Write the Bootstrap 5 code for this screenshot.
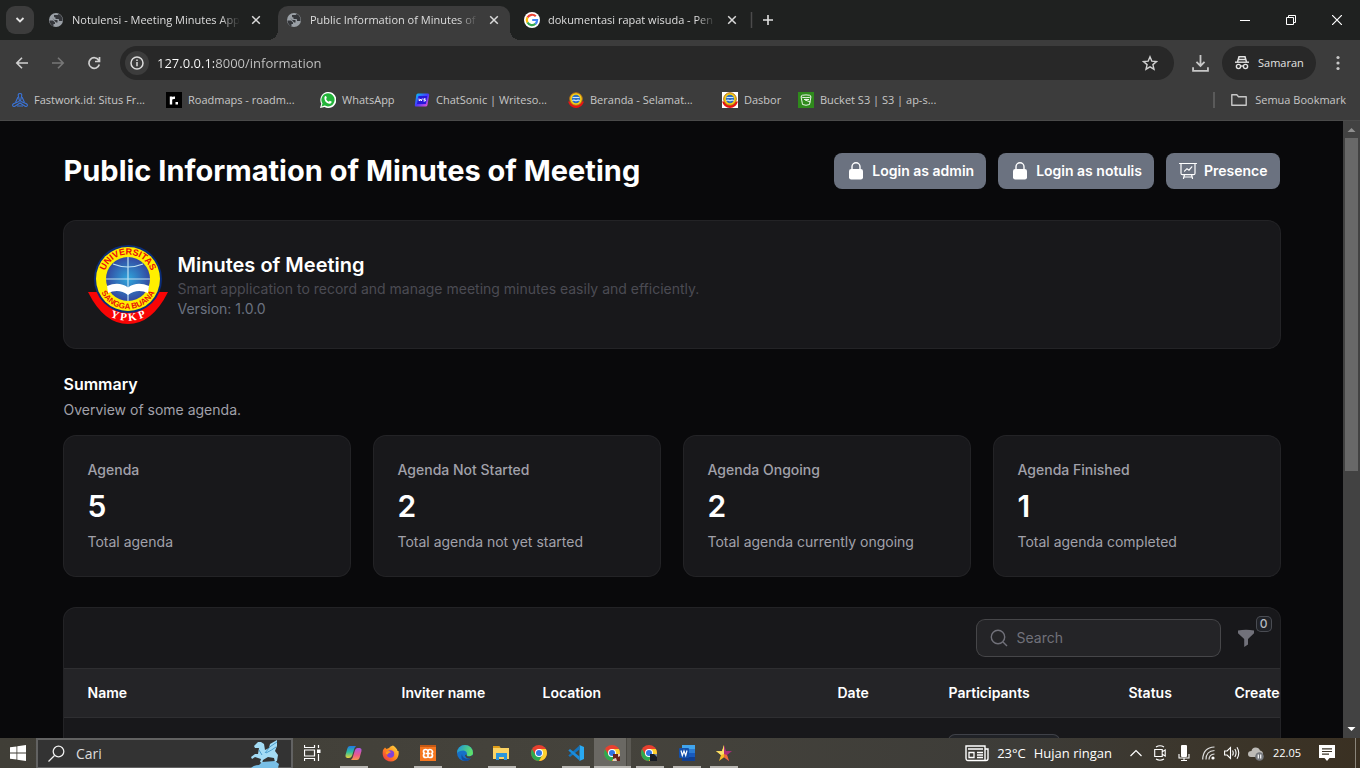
<!DOCTYPE html>
<html lang="en" data-bs-theme="dark">
<head>
<meta charset="utf-8">
<meta name="viewport" content="width=device-width, initial-scale=1">
<title>Public Information of Minutes of Meeting</title>
<link href="https://cdn.jsdelivr.net/npm/bootstrap@5.3.0/dist/css/bootstrap.min.css" rel="stylesheet">
<style>
body{font-family:"Open Sans","Noto Sans",sans-serif;font-size:11px;line-height:16px;color:#dedede;background:#09090b}
svg{display:block;flex:none}
button{border:0;background:none;color:inherit;padding:0}
a{color:inherit;text-decoration:none}
/* browser frame */
.tabstrip{height:40px;background:#1f2120;padding-left:6px}
.tab-menu{width:28px;height:28px;border-radius:9px;background:#3c3c3c}
.tabs{gap:6px;margin-left:6px;padding-top:6px}
.tab-item{width:232px;padding:0 8px 6px;gap:8px;position:relative;border-radius:10px 10px 0 0}
.tab-item.current{background:#3c3c3c}
.tab-item.current::before,.tab-item.current::after{content:"";position:absolute;bottom:0;width:10px;height:10px}
.tab-item.current::before{left:-10px;background:radial-gradient(circle at 0 0,transparent 10px,#3c3c3c 10px)}
.tab-item.current::after{right:-10px;background:radial-gradient(circle at 100% 0,transparent 10px,#3c3c3c 10px)}
.tab-title{overflow:hidden;white-space:nowrap;width:168px;-webkit-mask-image:linear-gradient(90deg,#000 148px,transparent 168px);mask-image:linear-gradient(90deg,#000 148px,transparent 168px)}
.win-btn{width:46px;height:40px;color:#fff}
.chrome-bars{background:#3c3c3c;border-bottom:1px solid #4a4a4a}
.toolbar{height:46px;padding:0 4px;color:#c7c7c7}
.tool-btn{width:36px;height:34px}
.omnibox{height:34px;border-radius:17px;background:#282828;padding:0 16px 0 5px}
.site-info{width:24px;height:24px;border-radius:12px;background:#3c3c3c}
.url-input{border:0;outline:0;font-size:13px;line-height:20px;padding:0;color:transparent;background:linear-gradient(90deg,#fff 57px,#c7c7c7 57px);-webkit-background-clip:text;background-clip:text}
.dl{padding:0 13px 0 18px}
.incog{height:34px;border-radius:17px;background:#282828;padding:0 12px;gap:8px;width:94px;color:#e3e3e3}
.bookmarks{height:34px;padding:0 14px 6px 12px;color:#c7c7c7}
.bm{gap:6px;white-space:nowrap;width:154px}
.bm-mid{width:94px}
.bm-short{width:76px}
.bm-sep{width:2px;height:16px;background:#5a5a5a;margin-right:16px}
/* page */
.view{min-height:0}
.page{font-family:Inter,sans-serif;font-size:14px;line-height:20px;color:#a1a1aa;overflow:hidden}
.shell{max-width:1280px;padding:32px}
.page h1{font-size:29px;line-height:36px;font-weight:700;color:#fff}
.acts{gap:12px}
.act{height:36px;border-radius:8px;background:#6b7280;color:#fff;font-weight:600;padding:0 12px;gap:6px}
.panel{background:#18181b;border-radius:12px;box-shadow:0 0 0 1px #232326}
.block-gap{margin-top:32px}
.brand{padding:24px 24px 23px;gap:10px}
.brand h2{font-size:20px;line-height:28px;font-weight:600;color:#fff}
.dim{color:#4b4b53}.dim2{color:#6b7280}
.sum-title{font-size:16px;line-height:24px;font-weight:600;color:#fff}
.stats{gap:24px}
.stat{padding:24px;gap:8px;flex:1 1 0}
.stat-label{font-weight:500}
.stat-num{font-size:30px;line-height:36px;font-weight:600;color:#fff}
.tbl-tools{padding:12px 16px 12px 24px;gap:8px;border-bottom:1px solid #2e2e31}
.find{width:243px;height:36px;border-radius:8px;background:#242427;box-shadow:0 0 0 1px #464649;padding:0 12px;gap:8px}
.find input{border:0;outline:0;background:none;color:#fff;padding:0;min-width:0}
.find input::placeholder{color:#71717a;opacity:1}
.filter{width:36px;height:36px;position:relative;color:#71717a}
.count{position:absolute;right:-8px;top:-4px;width:16px;height:16px;border-radius:5px;background:#202227;box-shadow:inset 0 0 0 1px #4a4c53;color:#b6b9c0;font-size:12px;line-height:16px;font-weight:500}
.agenda-scroll{overflow:hidden;border-radius:0 0 12px 12px}
.agenda{table-layout:fixed;width:120%;color:#fff;border-collapse:collapse}
.agenda th{height:48px;background:#242427;padding:0 12px;font-weight:600;border-bottom:1px solid #2e2e31;white-space:nowrap}
.agenda th:first-child{padding-left:24px}
.agenda td{padding:17px 12px}
.people{width:110px;height:24px;border-radius:6px;background:#202227;box-shadow:0 0 0 1px #3f4148}
.c1{width:326px}.c2{width:141px}.c3{width:295px}.c4{width:111px}.c5{width:180px}.c6{width:106px}
.scroller{width:17px;background:#424242}
.thumb{width:13px;height:54%;background:#686868}
/* taskbar */
.taskbar{height:30px;background:linear-gradient(90deg,#403e37 0,#45433c 45%,#3d3c38 75%,#3b3428 92%,#3a3022 100%);color:#fff}
.start{width:36px}
.win-search{width:257px;background:#333;border:2px solid #626262;border-bottom-width:1px;padding-left:10px;gap:11px}
.win-search input{border:0;outline:0;background:none;padding:0;width:160px;font-size:14px;color:#ddd}
.win-search input::placeholder{color:#dcdcdc;opacity:1}
.tv{width:38px}
.app{width:37px;position:relative}
.app.on::after{content:"";position:absolute;bottom:0;left:5px;right:4px;height:2px;background:#b9b7b3}
.app.front{background:linear-gradient(90deg,#6a6863 32px,#4a4842 32px 33px,#5b5953 33px)}
.app.front::after{left:0;right:0}
.slot{width:24px}
.weather{font-size:13px;gap:8px;margin-right:12px}
.clock{width:41px;padding-left:5px}
.note{width:36px}
.peek{width:11px;border-right:1px solid #8a857b;margin-right:4px}
</style>
</head>
<body class="d-flex flex-column vh-100 overflow-hidden">
<svg width="0" height="0" class="position-absolute" aria-hidden="true">
<defs>
<radialGradient id="sky"><stop offset="0" stop-color="#2fa6dc"/><stop offset="1" stop-color="#3348a0"/></radialGradient>
<linearGradient id="ws" x1="0" x2="1" y2="1"><stop offset="0" stop-color="#00d5f5"/><stop offset=".5" stop-color="#4836ff"/><stop offset="1" stop-color="#ff58c8"/></linearGradient>
<linearGradient id="edge" x1="0" x2="1" y2=".3"><stop offset="0" stop-color="#1b8fe0"/><stop offset="1" stop-color="#5ee06b"/></linearGradient>
<linearGradient id="fx" x1="1" x2="0" y2="1"><stop offset="0" stop-color="#ffe04a"/><stop offset=".5" stop-color="#ff8a1c"/><stop offset="1" stop-color="#f0244c"/></linearGradient>
<linearGradient id="cpa" x2="0" y2="1"><stop offset="0" stop-color="#2277e8"/><stop offset=".5" stop-color="#2bc09c"/><stop offset="1" stop-color="#e8d23a"/></linearGradient>
<linearGradient id="cpb" x2="0" y2="1"><stop offset="0" stop-color="#a557e8"/><stop offset=".6" stop-color="#ee5a88"/><stop offset="1" stop-color="#f89b4c"/></linearGradient>
<path id="arcTop" d="M15.500 34A24.500 24.500 0 0 1 64.500 34"/>
<path id="arcLow" d="M10 34A30 30 0 0 0 70 34"/>
<path id="arcBase" d="M2 51A41.600 41.600 0 0 0 78 51"/>
<symbol id="globe" viewBox="0 0 16 16"><circle cx="8" cy="8" r="7" fill="#9aa0a6"/><path d="M1.500 8.500H5L7 10.500V12H5.500V14.500C3 13.500 1.500 11 1.500 8.500ZM6 3V4.500Q6 5.500 7.500 5.500V7H10.500Q11.500 7.300 11 9H14.500Q15 4 10.500 1.800Q10.500 3 9.500 3ZM4 5.500L6.500 8H9.500V10.500H8Z" fill="#34363a"/></symbol>
<symbol id="shut" viewBox="0 0 16 16"><path d="M4.200 4.200l7.600 7.600M11.800 4.200l-7.600 7.600" stroke="#dadada" stroke-width="1.500" fill="none"/></symbol>
<symbol id="crest" viewBox="0 0 16 16"><path d="M0 9.500h16Q14 16 8 16T0 9.500Z" fill="#e81313"/><circle cx="8" cy="7" r="6.300" fill="#f8cf16" stroke="#b06a16"/><circle cx="8" cy="7" r="4.200" fill="#2d6fc2"/><path d="M4.200 8.500q2-1 3.800.4 2-1.400 3.800-.4M4.500 5.500h7" stroke="#cfe6f7" fill="none" stroke-width="1.100"/></symbol>
<symbol id="chrome" viewBox="0 0 16 16"><circle cx="8" cy="8" r="8" fill="#e8402f"/><path d="M1.100 4A8 8 0 0 0 8 16l3.500-6H4.500Z" fill="#2da94f"/><path d="M8 16A8 8 0 0 0 14.900 4H8l3.500 6Z" fill="#fdd131"/><circle cx="8" cy="8" r="4" fill="#fff"/><circle cx="8" cy="8" r="3" fill="#2f75e6"/></symbol>
<symbol id="lock" viewBox="0 0 20 20"><path d="M6 9V5.700a4 4 0 0 1 8 0V9" fill="none" stroke="#fff" stroke-width="1.400"/><rect x="3" y="8" width="14" height="10.500" rx="2.200" fill="#fff"/></symbol>
</defs>
</svg>

<header>
<div class="tabstrip d-flex align-items-center">
  <button class="tab-menu d-flex align-items-center justify-content-center" aria-label="Search tabs"><svg width="12" height="12" viewBox="0 0 12 12"><path d="M2.500 4l3.500 3.500L9.500 4" fill="none" stroke="#e3e3e3" stroke-width="1.800"/></svg></button>
  <div class="tabs d-flex align-self-stretch">
    <div class="tab-item d-flex align-items-center"><svg width="16" height="16"><use href="#globe"/></svg><span class="tab-title">Notulensi - Meeting Minutes App</span><button aria-label="Close tab"><svg width="16" height="16"><use href="#shut"/></svg></button></div>
    <div class="tab-item current d-flex align-items-center"><svg width="16" height="16"><use href="#globe"/></svg><span class="tab-title">Public Information of Minutes of</span><button aria-label="Close tab"><svg width="16" height="16"><use href="#shut"/></svg></button></div>
    <div class="tab-item d-flex align-items-center"><svg width="16" height="16" viewBox="0 0 16 16"><circle cx="8" cy="8" r="8" fill="#fff"/><g fill="none" stroke-width="2.200"><path d="M11.800 4.300A5.200 5.200 0 0 0 3.500 5.500" stroke="#ea4335"/><path d="M3.500 5.400A5.200 5.200 0 0 0 3.500 10.600" stroke="#fbbc05"/><path d="M3.500 10.500A5.200 5.200 0 0 0 11.500 11.800" stroke="#34a853"/><path d="M11.400 11.900A5.200 5.200 0 0 0 13.100 8H8.200" stroke="#4285f4"/></g></svg><span class="tab-title">dokumentasi rapat wisuda - Pen</span><button aria-label="Close tab"><svg width="16" height="16"><use href="#shut"/></svg></button></div>
  </div>
  <svg width="40" height="28" viewBox="0 0 40 28"><path d="M3.500 6v16" stroke="#4b4b4b" stroke-width="1.500"/><path d="M20 9v10M15 14h10" stroke="#e0e0e0" stroke-width="1.600"/></svg>
  <div class="d-flex ms-auto">
    <button class="win-btn d-flex align-items-center justify-content-center" aria-label="Minimize"><svg width="10" height="10"><path d="M0 5.500h10" stroke="#fff"/></svg></button>
    <button class="win-btn d-flex align-items-center justify-content-center" aria-label="Restore"><svg width="10" height="10"><path d="M.5 2.500h7v7h-7zM2.500 2.500v-2h7v7h-2" fill="none" stroke="#fff"/></svg></button>
    <button class="win-btn d-flex align-items-center justify-content-center" aria-label="Close"><svg width="10" height="10"><path d="M0 0l10 10M10 0L0 10" stroke="#fff" stroke-width="1.200"/></svg></button>
  </div>
</div>
<div class="chrome-bars">
<div class="toolbar d-flex align-items-center">
  <button class="tool-btn d-flex align-items-center justify-content-center" aria-label="Back"><svg width="14" height="14" viewBox="0 0 14 14"><path d="M13 7H2M7 1.800L1.800 7 7 12.200" fill="none" stroke="#d0d0d0" stroke-width="1.600"/></svg></button>
  <button class="tool-btn d-flex align-items-center justify-content-center" aria-label="Forward"><svg width="14" height="14" viewBox="0 0 14 14"><path d="M1 7h11M7 1.800L12.200 7 7 12.200" fill="none" stroke="#777" stroke-width="1.600"/></svg></button>
  <button class="tool-btn d-flex align-items-center justify-content-center" aria-label="Reload"><svg width="14" height="14" viewBox="0 0 14 14"><path d="M11.700 4.200A5.300 5.300 0 1 0 12.300 8.500M12.500 1v4.500H8" fill="none" stroke="#d0d0d0" stroke-width="1.700"/></svg></button>
  <div class="omnibox d-flex align-items-center flex-grow-1 ms-2">
    <button class="site-info d-flex align-items-center justify-content-center" aria-label="Site information"><svg width="14" height="14" viewBox="0 0 14 14"><circle cx="7" cy="7" r="6" fill="none" stroke="#dcdcdc" stroke-width="1.500"/><path d="M7 6v4.200M7 3.500v1.500" stroke="#dcdcdc" stroke-width="1.500"/></svg></button>
    <input class="url-input flex-grow-1 ms-2" type="text" aria-label="Address" value="127.0.0.1:8000/information">
    <button aria-label="Bookmark this page"><svg width="16" height="16" viewBox="0 0 16 16"><path d="M8 1.800l1.800 4.300 4.700.4-3.600 3.100 1.100 4.600L8 11.800l-4 2.400 1.100-4.600L1.500 6.500l4.700-.4Z" fill="none" stroke="#d0d0d0" stroke-width="1.400"/></svg></button>
  </div>
  <button class="dl d-flex justify-content-center" aria-label="Downloads"><svg width="17" height="17" viewBox="0 0 16 16"><path d="M8 0v10M4.200 6.500L8 10.300l3.800-3.800M1 11.500V15h14v-3.500" fill="none" stroke="#c7c7c7" stroke-width="1.700"/></svg></button>
  <button class="incog d-flex align-items-center me-1" aria-label="Samaran"><svg width="16" height="16" viewBox="0 0 16 16"><path d="M1 7.200h14" stroke="#e3e3e3" stroke-width="1.400"/><path d="M3.500 7L5 1.700h6L12.500 7M5 4.500h6" fill="none" stroke="#e3e3e3" stroke-width="1.500"/><circle cx="4.500" cy="11.500" r="2.100" fill="none" stroke="#e3e3e3" stroke-width="1.400"/><circle cx="11.500" cy="11.500" r="2.100" fill="none" stroke="#e3e3e3" stroke-width="1.400"/><path d="M6.500 11h3" stroke="#e3e3e3" stroke-width="1.300"/></svg>Samaran</button>
  <button class="tool-btn d-flex align-items-center justify-content-center" aria-label="Menu"><svg width="4" height="16" viewBox="0 0 4 16" fill="#c7c7c7"><circle cx="2" cy="2.500" r="1.600"/><circle cx="2" cy="8" r="1.600"/><circle cx="2" cy="13.500" r="1.600"/></svg></button>
</div>
<nav class="bookmarks d-flex align-items-center" aria-label="Bookmarks">
  <a href="#" class="bm d-flex align-items-center"><svg width="16" height="16" viewBox="0 0 16 16"><g fill="none" stroke="#3b74d8" stroke-width="1.100"><path d="M8 1.500c2 0 2 1.500 1.500 3L8.500 9h-1L6.500 4.500C6 3 6 1.500 8 1.500Z"/><path d="M7 9.500l-5.500 2.300c-1.500 1-1 3 1 2.700L8 11l5.500 3.500c2 .3 2.500-1.700 1-2.700L9 9.500"/><path d="M6 5L3.500 10.500M10 5l2.500 5.500M5 14h6"/></g></svg>Fastwork.id: Situs Fr...</a>
  <a href="#" class="bm d-flex align-items-center"><svg width="16" height="16" viewBox="0 0 16 16"><path d="M0 0h16v16H0Z" fill="#000"/><path d="M5 12.500V4.500M5 8.500q0-3 4-2.700" fill="none" stroke="#fff" stroke-width="2.400"/><path d="M9.500 10h2.500v2.500H9.500Z" fill="#fff"/></svg>Roadmaps - roadm...</a>
  <a href="#" class="bm bm-mid d-flex align-items-center"><svg width="16" height="16" viewBox="0 0 16 16"><path d="M0 16L1.300 11.800A8 8 0 1 1 4.500 15Z" fill="#fff"/><path d="M1.500 14.500L2.500 11.500A6.600 6.600 0 1 1 4.800 13.600Z" fill="#23b33a"/><path d="M5 4.300q1-.8 1.600 1l.2.800-.8 1q1 2 2.800 2.700l1-1 2 1q-.4 2.200-2.700 1.900Q4.500 10.500 4.400 6q0-1 .6-1.700Z" fill="#fff"/></svg>WhatsApp</a>
  <a href="#" class="bm d-flex align-items-center"><svg width="16" height="16" viewBox="0 0 16 16"><path d="M4 1.500h10q1.500 0 1.200 1.500L13.500 13q-.3 1.500-2 1.500H2Q.5 14.500.8 13L2.300 3Q2.500 1.500 4 1.500Z" fill="url(#ws)"/><path d="M4.500 4h8.800l-1.500 8H3Z" fill="#2617d8"/><path d="M5 6.500l.3 2.500 1.200-2 .8 2 1-2.500M11.500 6.800h-1.600v1h1.400v1.200H9.500" stroke="#fff" fill="none"/></svg>ChatSonic | Writeso...</a>
  <a href="#" class="bm d-flex align-items-center"><svg width="16" height="16"><use href="#crest"/></svg>Beranda - Selamat...</a>
  <a href="#" class="bm bm-short d-flex align-items-center"><svg width="16" height="16"><path d="M0 0h16v16H0Z" fill="#fff"/><use href="#crest"/></svg>Dasbor</a>
  <a href="#" class="bm d-flex align-items-center"><svg width="16" height="16" viewBox="0 0 16 16"><path d="M0 0h16v16H0Z" fill="#2f8a1c"/><path d="M3 4.500L4.500 12.500q3.500 1.500 7 0L13 4.500" fill="none" stroke="#e8f5e4"/><ellipse cx="8" cy="4.300" rx="5" ry="1.400" fill="none" stroke="#e8f5e4"/><path d="M6 7.500h5M7 8l5.500 2" stroke="#e8f5e4" fill="none"/></svg>Bucket S3 | S3 | ap-s...</a>
  <span class="bm-sep ms-auto"></span>
  <a href="#" class="d-flex align-items-center gap-2 text-nowrap"><svg width="16" height="14" viewBox="0 0 16 14"><path d="M.8 1.800h5l1.700 2h7.700v8.400H.8Z" fill="none" stroke="#c7c7c7" stroke-width="1.400" stroke-linejoin="round"/></svg>Semua Bookmark</a>
</nav>
</div>
</header>

<div class="view d-flex flex-grow-1">
<main class="page flex-grow-1">
<div class="shell mx-auto">
  <div class="d-flex justify-content-between align-items-center">
    <h1 class="m-0">Public Information of Minutes of Meeting</h1>
    <div class="acts d-flex">
      <a href="#" class="act d-flex align-items-center"><svg width="20" height="20"><use href="#lock"/></svg>Login as admin</a>
      <a href="#" class="act d-flex align-items-center"><svg width="20" height="20"><use href="#lock"/></svg>Login as notulis</a>
      <a href="#" class="act d-flex align-items-center"><svg width="20" height="20" viewBox="0 0 20 20"><path d="M1.500 2.500h17M3 2.500v9.700q0 1.500 1.500 1.500h11q1.500 0 1.500-1.500V2.500M6.500 13.700L5.500 17.500M13.500 13.700l1 3.800M6 16h8M6.500 10.200l2.500-2.500 2 1.500 2.800-3.400" fill="none" stroke="#fff" stroke-width="1.200" stroke-linecap="round"/></svg>Presence</a>
    </div>
  </div>
  <section class="panel brand block-gap d-flex align-items-center">
    <svg width="80" height="80" viewBox="0 0 80 80" role="img" aria-label="Universitas Sangga Buana YPKP">
      <path d="M0 47h80Q64 79 40 79T0 47Z" fill="#f90505"/>
      <circle cx="40" cy="34" r="34" fill="#0b2c78"/><circle cx="40" cy="34" r="32" fill="#ffef00"/><circle cx="40" cy="34" r="22" fill="url(#sky)"/>
      <g stroke="#bfe2f2" fill="none" stroke-width="1.200"><path d="M40 12v44M18 34h44M25 19Q40 25 55 19"/></g>
      <path d="M19 41Q31 36 40 42.500 49 36 61 41L60 48Q49 43 40 50 31 43 20 48Z" fill="#fff"/>
      <g font-family="Liberation Sans,sans-serif" font-weight="700" fill="#e80b0b" text-anchor="middle"><text font-size="9"><textPath href="#arcTop" startOffset="50%">UNIVERSITAS</textPath></text><text font-size="8"><textPath href="#arcLow" startOffset="50%">SANGGA BUANA</textPath></text></g>
      <text font-family="Liberation Serif,serif" font-weight="700" font-size="11" fill="#fff" text-anchor="middle"><textPath href="#arcBase" startOffset="50%">Y P K P</textPath></text>
    </svg>
    <div>
      <h2 class="m-0">Minutes of Meeting</h2>
      <p class="m-0 dim">Smart application to record and manage meeting minutes easily and efficiently.</p>
      <p class="m-0 dim2">Version: 1.0.0</p>
    </div>
  </section>
  <section class="mt-4">
    <h3 class="sum-title m-0">Summary</h3>
    <p class="mt-1 mb-3">Overview of some agenda.</p>
    <div class="stats d-flex">
      <div class="panel stat d-flex flex-column"><span class="stat-label">Agenda</span><span class="stat-num">5</span><span>Total agenda</span></div>
      <div class="panel stat d-flex flex-column"><span class="stat-label">Agenda Not Started</span><span class="stat-num">2</span><span>Total agenda not yet started</span></div>
      <div class="panel stat d-flex flex-column"><span class="stat-label">Agenda Ongoing</span><span class="stat-num">2</span><span>Total agenda currently ongoing</span></div>
      <div class="panel stat d-flex flex-column"><span class="stat-label">Agenda Finished</span><span class="stat-num">1</span><span>Total agenda completed</span></div>
    </div>
  </section>
  <section class="panel block-gap">
    <div class="tbl-tools d-flex justify-content-end align-items-center">
      <label class="find d-flex align-items-center"><svg width="20" height="20" viewBox="0 0 20 20"><circle cx="9" cy="9" r="6.700" fill="none" stroke="#71717a" stroke-width="1.400"/><path d="M14 14l4 4" stroke="#71717a" stroke-width="1.400"/></svg><input type="search" placeholder="Search" aria-label="Search"></label>
      <button class="filter d-flex align-items-center justify-content-center" aria-label="Filter"><svg width="20" height="20" viewBox="0 0 20 20"><path d="M2 2.500Q10 .8 18 2.500V5.200L12 11v5.500L8.200 19V11L2 5.200Z" fill="#71717a"/></svg><span class="count">0</span></button>
    </div>
    <div class="agenda-scroll">
    <table class="agenda">
      <colgroup><col class="c1"><col class="c2"><col class="c3"><col class="c4"><col class="c5"><col class="c6"><col></colgroup>
      <thead><tr><th>Name</th><th>Inviter name</th><th>Location</th><th>Date</th><th>Participants</th><th>Status</th><th>Created at</th></tr></thead>
      <tbody><tr><td></td><td></td><td></td><td></td><td><div class="people"></div></td><td></td><td></td></tr></tbody>
    </table>
    </div>
  </section>
</div>
</main>
<div class="scroller d-flex flex-column align-items-center" aria-hidden="true">
  <svg width="17" height="17" viewBox="0 0 17 17"><path d="M4.500 11L8.500 7l4 4Z" fill="#8f8f8f"/></svg>
  <div class="thumb"></div>
  <svg class="mt-auto" width="17" height="17" viewBox="0 0 17 17"><path d="M4.500 6l4 4 4-4Z" fill="#fff"/></svg>
</div>
</div>

<footer class="taskbar d-flex align-items-stretch">
  <button class="start d-flex align-items-center justify-content-center" aria-label="Start"><svg width="16" height="16" viewBox="0 0 16 16" fill="#fff"><path d="M0 2.300L6.500 1.400v6.200H0ZM7.300 1.300L16 0v7.600H7.300ZM0 8.400h6.500v6.200L0 13.700ZM7.300 8.400H16V16L7.300 14.700Z"/></svg></button>
  <label class="win-search d-flex align-items-center"><svg width="17" height="17" viewBox="0 0 17 17"><circle cx="10.500" cy="6.500" r="5.300" fill="none" stroke="#eee" stroke-width="1.300"/><path d="M6.500 10.500L.5 16.500" stroke="#eee" stroke-width="1.300"/></svg><input type="text" placeholder="Cari" aria-label="Cari"><svg class="ms-auto me-2" width="34" height="28" viewBox="0 0 34 28"><path d="M2 28Q5 25 10 25L13 22 26 21 30 24 29 28Z" fill="#79bfe6"/><path d="M5 6L9 2 12 2 15 4 16 10 20 8 21 4 28 0 28 6 26 11 29 15 28 21 26 22 25 18 19 17 14 20 13 23 11 22 12 19 6 17 3 19 2 17 6 14 9 14 10 8 6 8Z" fill="#a4dcf5"/><path d="M16 13Q20 6 28 2M17 13Q23 10 27 7M10 10L13 15" stroke="#4a9ccc" fill="none"/></svg></label>
  <button class="tv d-flex align-items-center justify-content-center" aria-label="Task view"><svg width="17" height="16" viewBox="0 0 17 16"><path d="M.5 0v2.500h10V0M.5 16v-2.500h10V16M.5 5h10v6H.5ZM14.500 0v3M14.500 9v7" fill="none" stroke="#fff" stroke-width="1.200"/><path d="M13 4.500h3.500V8H13Z" fill="#fff"/></svg></button>
  <button class="app on d-flex align-items-center justify-content-center ms-1" aria-label="Copilot"><svg width="17" height="16" viewBox="0 0 17 16"><path d="M5 1h6L9.500 3 7 11Q6 13 4 13H2Q0 12.500.5 10L2.500 3Q3.200 1 5 1Z" fill="url(#cpa)"/><path d="M12.500 3H15q2 .5 1.500 3L14.500 13q-.7 2-2.500 2H6L7.500 13 10 5Q11 3 12.500 3Z" fill="url(#cpb)"/></svg></button>
  <button class="app d-flex align-items-center justify-content-center" aria-label="Firefox"><svg width="17" height="17" viewBox="0 0 17 17"><path d="M1 5L3 2.500 4.500 4 7 3Q8 1 11 .5 15 3 15.500 6L16.500 6Q17.500 12 13.500 15 9 18 4 15 -.5 12 1 5Z" fill="url(#fx)"/><circle cx="8.500" cy="9" r="3.700" fill="#8141d8"/><path d="M4 7q3-2 5 .5-3 0-3 2Q3 9 4 7Z" fill="#ff9a1c"/></svg></button>
  <button class="app on d-flex align-items-center justify-content-center" aria-label="XAMPP"><svg width="16" height="16" viewBox="0 0 16 16"><path d="M0 0h16v16H0Z" fill="#f5761f"/><path d="M0 0h16v2H0Z" fill="#c65914"/><path d="M5.500 4.500Q3.500 4.500 3.500 6.500T5.500 8.500Q3.500 8.500 3.500 10.500T6 12.500 8 10.500L8 6.500Q8 4.500 10 4.500T12.500 6.500 10.500 8.500Q12.500 8.500 12.500 10.500T10 12.500 8 10.500M8 6.500Q8 4.500 5.500 4.500M6 8.500h4" fill="none" stroke="#fff" stroke-width="1.700"/></svg></button>
  <button class="app d-flex align-items-center justify-content-center" aria-label="Edge"><svg width="16" height="16" viewBox="0 0 16 16"><circle cx="8" cy="8" r="8" fill="#1670c8"/><path d="M0 8A8 8 0 0 1 16 8Q16 11 12.500 11.300 9 11.200 10 9 10 6 6.500 5.500 2 5.500 0 8Z" fill="url(#edge)"/><path d="M5 9Q5 14 11.500 13.800L14.500 12.500Q12 16.500 8 16 3 15 5 9Z" fill="#124c9d"/><path d="M10 9.500Q8.500 11.500 12.500 11.500L16 10 15 13Q9 15 8 10Z" fill="#45433c"/></svg></button>
  <button class="app on d-flex align-items-center justify-content-center" aria-label="File Explorer"><svg width="17" height="16" viewBox="0 0 17 16"><path d="M0 1h6l1.500 2H16v11H0Z" fill="#fbd364"/><path d="M0 1h6l1.500 2H0Z" fill="#de9c17"/><path d="M3 8h11v7h-3v-3H6v3H3Z" fill="#2b95db"/></svg></button>
  <button class="app d-flex align-items-center justify-content-center" aria-label="Chrome"><svg width="16" height="16"><use href="#chrome"/></svg></button>
  <button class="app on d-flex align-items-center justify-content-center" aria-label="Visual Studio Code"><svg width="16" height="16" viewBox="0 0 16 16"><path d="M11.500 0L16 2v12l-4.500 2Z" fill="#29a9f2"/><path d="M11.500.5v4L2 12 .3 10.500Z" fill="#1273bd"/><path d="M11.500 15.500v-4L2 4 .3 5.500Z" fill="#1b8cdb"/></svg></button>
  <button class="app on front d-flex align-items-center justify-content-center" aria-label="Chrome, incognito"><svg width="17" height="17" viewBox="0 0 17 17"><use href="#chrome" width="16" height="16"/><path d="M9 9h7v7H9Z" fill="#e5cfc2"/><path d="M9 9h5v3l2-1v5h-3l-1-3-3 1Z" fill="#6b241d"/></svg></button>
  <button class="app on d-flex align-items-center justify-content-center" aria-label="Chrome, work"><svg width="17" height="17" viewBox="0 0 17 17"><use href="#chrome" width="16" height="16"/><path d="M9 9h5l2 2v5H9Z" fill="#171c25"/><path d="M13 9h3v3Z" fill="#6f839b"/></svg></button>
  <button class="app on d-flex align-items-center justify-content-center" aria-label="Word"><svg width="16" height="16" viewBox="0 0 16 16"><path d="M3 0h13v16H3Z" fill="#2b7cd3"/><path d="M3 0h13v4H3Z" fill="#41a5ee"/><path d="M3 8h13v4H3Z" fill="#185abd"/><path d="M3 12h13v4H3Z" fill="#103f91"/><rect y="3" width="10" height="10" rx="1" fill="#1450ab"/><path d="M2 5.500l1.300 5L5 6l1.700 4.500L8 5.500" fill="none" stroke="#fff" stroke-width="1.200"/></svg></button>
  <button class="app on d-flex align-items-center justify-content-center" aria-label="StarUML"><svg width="16" height="16" viewBox="0 0 16 16"><path d="M8 0l2 6h6l-5 4 2 6-5-3.800Z" fill="#a92c7a"/><path d="M8 0L6 6H0l5 4-2 6 5-3.800Z" fill="#f5bd27"/><path d="M8 0v9L5 10 0 6l6 .2Z" fill="#fbe06a"/><path d="M8 9l3 1 2 6-5-3.800Z" fill="#ee6d35"/></svg></button>
  <div class="d-flex align-items-center ms-auto">
    <div class="weather d-flex align-items-center"><svg width="24" height="17" viewBox="0 0 24 17"><path d="M1 1h19v14.500H3Q1 15.500 1 13ZM20 4h3v9.500q0 2-2 2h-2" fill="none" stroke="#fff" stroke-width="1.400"/><path d="M3 4h15M12 7.500h6M12 10h6M12 12.500h6M4 7.500h5v5H4Z" fill="none" stroke="#fff" stroke-width="1.300"/></svg><span>23°C</span><span>Hujan ringan</span></div>
    <button class="slot d-flex justify-content-center" aria-label="Hidden icons"><svg width="12" height="8"><path d="M.5 7L6 1.500 11.500 7" fill="none" stroke="#fff" stroke-width="1.200"/></svg></button>
    <span class="slot d-flex justify-content-center"><svg width="12" height="16" viewBox="0 0 12 16"><path d="M.7 4.500h7.500v7H.7ZM8.200 6.800l3-1.800v6l-3-1.800M2 2Q6-.5 10 2M2 14q4 2.500 8 0" fill="none" stroke="#fff" stroke-width="1.100"/></svg></span>
    <span class="slot d-flex justify-content-center"><svg width="12" height="16" viewBox="0 0 12 16"><rect x="3" width="6" height="12" rx="1" fill="#fff"/><path d="M1 9v4h10V9M6 13v3M3 15.500h6" fill="none" stroke="#fff" stroke-width="1.100"/></svg></span>
    <span class="slot d-flex justify-content-center"><svg width="13" height="14" viewBox="0 0 13 14"><g fill="none" stroke="#ddd" stroke-width="1.200"><path d="M.7 13.500Q1 1.500 12.500 1"/><path d="M4 13.500Q4 5 12.500 4.500"/><path d="M7 13.500Q7 8.500 12.500 8"/></g><circle cx="11" cy="12" r="1.600" fill="#fff"/></svg></span>
    <span class="slot d-flex justify-content-center"><svg width="16" height="14" viewBox="0 0 16 14"><path d="M.6 5h2.500L6.500 1.500v11L3.100 9H.6ZM8.500 4.500q1.500 2.500 0 5M10.800 3q2.500 4 0 8M13 1.300q3.500 5.700 0 11.400" fill="none" stroke="#fff" stroke-width="1.100"/></svg></span>
    <span class="slot d-flex justify-content-center"><svg width="16" height="16" viewBox="0 0 16 16"><path d="M3 12Q0 12 0 9t3.500-3Q4 2.500 7.500 2.500T12 5.500Q15 6 15 9v3Z" fill="#bdbbb7"/><circle cx="11.500" cy="11.500" r="4.300" fill="#74777c"/><path d="M10.300 9.500v4M12.700 9.500v4" stroke="#fff" stroke-width="1.200"/></svg></span>
    <span class="clock">22.05</span>
    <button class="note d-flex justify-content-center" aria-label="Notifications"><svg width="16" height="16" viewBox="0 0 16 16"><path d="M0 0h16v13h-5.500L8 16l-2.500-3H0Z" fill="#fff"/><path d="M3 3.800h10M3 6.500h10M3 9.200h7" stroke="#3b3428" stroke-width="1.200"/></svg></button>
    <span class="peek align-self-stretch"></span>
  </div>
</footer>
<script src="https://cdn.jsdelivr.net/npm/bootstrap@5.3.0/dist/js/bootstrap.bundle.min.js"></script>
</body>
</html>
